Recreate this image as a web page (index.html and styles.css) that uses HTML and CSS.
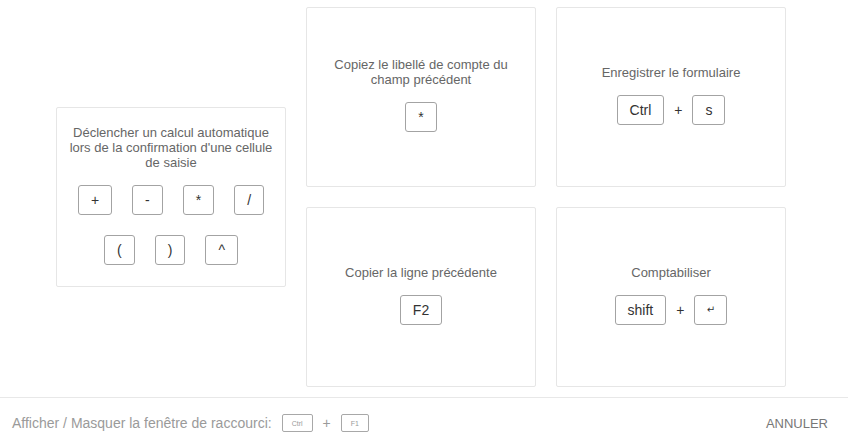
FILE: index.html
```html
<!DOCTYPE html>
<html lang="fr">

<head>
  <meta charset="UTF-8">
  <meta name="viewport" content="width=device-width, initial-scale=1.0">
  <title>Raccourcis clavier</title>
  <link rel="stylesheet" href="styles.css">
</head>

<body>

  <div class="shortcuts">
    <div class="card">
      <p class="label">Déclencher un calcul automatique lors de la confirmation d'une cellule de saisie</p>
      <div class="keys keys-grid">
        <span class="key">+</span>
        <span class="key">-</span>
        <span class="key">*</span>
        <span class="key">/</span>
        <span class="key">(</span>
        <span class="key">)</span>
        <span class="key">^</span>
      </div>
    </div>

    <div class="grid">
      <div class="card">
        <p class="label">Copiez le libellé de compte du champ précédent</p>
        <div class="keys">
          <span class="key">*</span>
        </div>
      </div>
      <div class="card">
        <p class="label">Enregistrer le formulaire</p>
        <div class="keys">
          <span class="key">Ctrl</span>
          <span class="plus">+</span>
          <span class="key">s</span>
        </div>
      </div>
      <div class="card">
        <p class="label">Copier la ligne précédente</p>
        <div class="keys">
          <span class="key">F2</span>
        </div>
      </div>
      <div class="card">
        <p class="label">Comptabiliser</p>
        <div class="keys">
          <span class="key">shift</span>
          <span class="plus">+</span>
          <span class="key key-enter">&#8629;</span>
        </div>
      </div>
    </div>
  </div>

  <div class="footer">
    <div class="toggle-hint">
      <span>Afficher / Masquer la fenêtre de raccourci:</span>
      <span class="key key-small">Ctrl</span>
      <span class="plus">+</span>
      <span class="key key-small">F1</span>
    </div>
    <button class="cancel">ANNULER</button>
  </div>

</body>

</html>
```

FILE: styles.css
```css
body {
  font-family: "Liberation Sans", Arial, sans-serif;
  margin: 0;
  padding: 0;
  background-color: #ffffff;
}

.shortcuts {
  height: 397px;
  box-sizing: border-box;
  display: flex;
  align-items: center;
  gap: 20px;
  padding: 7px 0 10px 56px;
}

.grid {
  display: grid;
  grid-template-columns: 230px 230px;
  grid-auto-rows: 180px;
  gap: 20px;
}

.card {
  width: 230px;
  height: 180px;
  box-sizing: border-box;
  border: 1px solid #e6e6e6;
  border-radius: 2px;
  padding: 0 10px 5px;
  display: flex;
  flex-direction: column;
  justify-content: center;
  align-items: center;
  text-align: center;
}

.label {
  margin: 0 0 15px;
  font-size: 13px;
  line-height: 15px;
  color: #666666;
}

.keys {
  display: flex;
  align-items: center;
  justify-content: center;
  gap: 10px;
}

.keys-grid {
  flex-wrap: wrap;
  gap: 20px;
  width: 190px;
}

.key {
  display: inline-flex;
  align-items: center;
  justify-content: center;
  height: 30px;
  padding: 0 12px;
  box-sizing: border-box;
  border: 1px solid #a3a3a3;
  border-radius: 3px;
  font-size: 14px;
  color: #333333;
}

.key-enter {
  font-family: "DejaVu Sans", sans-serif;
  font-size: 10px;
  width: 33px;
  padding: 0;
}

.plus {
  font-size: 14px;
  color: #333333;
}

.footer {
  height: 47px;
  box-sizing: border-box;
  border-top: 1px solid #e8e8e8;
  display: flex;
  align-items: center;
  justify-content: space-between;
  padding: 4px 20px 0 12px;
}

.toggle-hint {
  display: flex;
  align-items: center;
  gap: 10px;
  font-size: 14px;
  color: #9a9a9a;
}

.toggle-hint .plus {
  color: #9a9a9a;
  font-size: 14px;
}

.key-small {
  height: 18px;
  min-width: 25px;
  padding: 0 9px;
  font-size: 7px;
  color: #9a9a9a;
  border-color: #a8a8a8;
  border-radius: 2px;
}

.cancel {
  border: none;
  background: none;
  padding: 0;
  font-family: inherit;
  font-size: 13px;
  color: #777777;
  cursor: pointer;
}
```
